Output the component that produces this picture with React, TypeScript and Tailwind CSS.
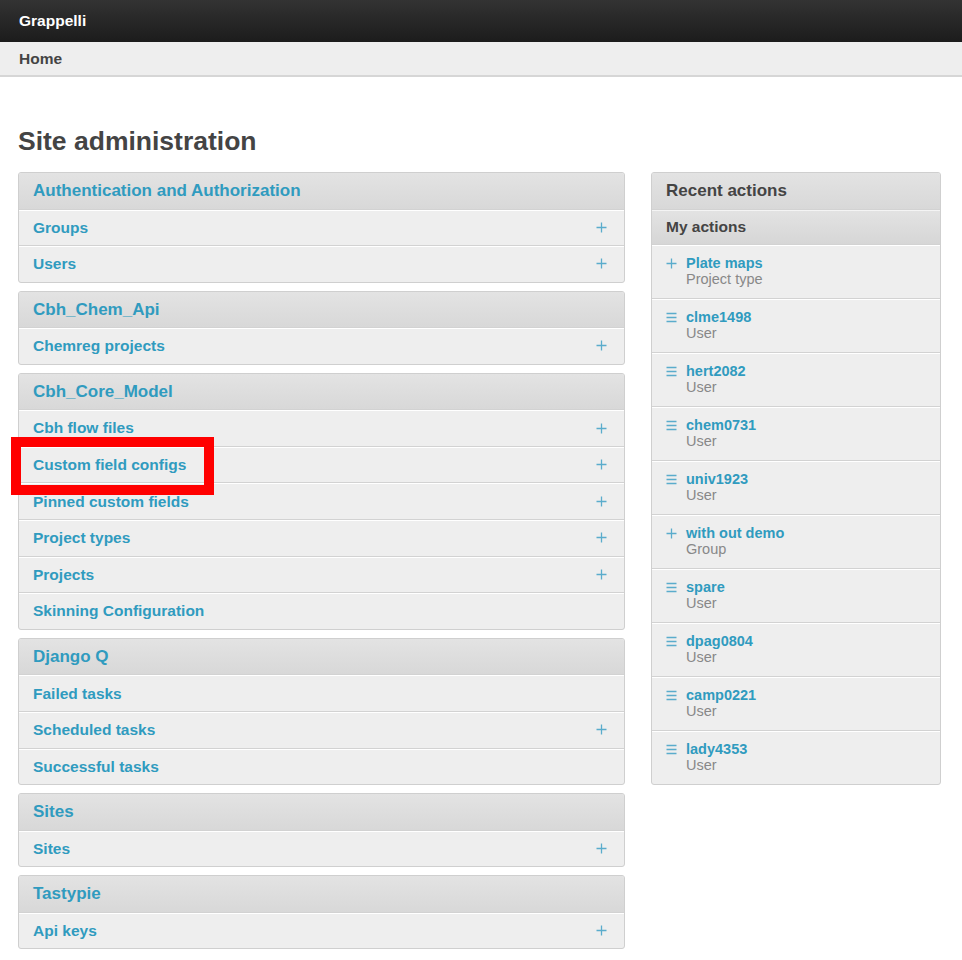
import React from "react";

const modules = [
  {
    title: "Authentication and Authorization",
    rows: [
      { name: "Groups", add: true },
      { name: "Users", add: true },
    ],
  },
  { title: "Cbh_Chem_Api", rows: [{ name: "Chemreg projects", add: true }] },
  {
    title: "Cbh_Core_Model",
    rows: [
      { name: "Cbh flow files", add: true },
      { name: "Custom field configs", add: true },
      { name: "Pinned custom fields", add: true },
      { name: "Project types", add: true },
      { name: "Projects", add: true },
      { name: "Skinning Configuration", add: false },
    ],
  },
  {
    title: "Django Q",
    rows: [
      { name: "Failed tasks", add: false },
      { name: "Scheduled tasks", add: true },
      { name: "Successful tasks", add: false },
    ],
  },
  { title: "Sites", rows: [{ name: "Sites", add: true }] },
  { title: "Tastypie", rows: [{ name: "Api keys", add: true }] },
];

const actions = [
  { name: "Plate maps", type: "Project type", kind: "add" },
  { name: "clme1498", type: "User", kind: "change" },
  { name: "hert2082", type: "User", kind: "change" },
  { name: "chem0731", type: "User", kind: "change" },
  { name: "univ1923", type: "User", kind: "change" },
  { name: "with out demo", type: "Group", kind: "add" },
  { name: "spare", type: "User", kind: "change" },
  { name: "dpag0804", type: "User", kind: "change" },
  { name: "camp0221", type: "User", kind: "change" },
  { name: "lady4353", type: "User", kind: "change" },
];

function PlusIcon() {
  return (
    <svg width="11" height="11" viewBox="0 0 11 11" className="shrink-0">
      <path d="M5.5 0.5v10M0.5 5.5h10" stroke="#5aaccc" strokeWidth="1.3" />
    </svg>
  );
}

function ListIcon() {
  return (
    <svg width="11" height="11" viewBox="0 0 11 11" className="shrink-0">
      <path d="M0.5 1.5h10M0.5 5.5h10M0.5 9.5h10" stroke="#5aaccc" strokeWidth="1.3" />
    </svg>
  );
}

export default function App() {
  return (
    <div
      className="relative min-h-[960px] bg-white"
      style={{ fontFamily: '"Liberation Sans", Arial, sans-serif' }}
    >
      {/* Header */}
      <div className="h-[42px] bg-gradient-to-b from-[#333333] to-[#1c1c1c] flex items-center px-[19px]">
        <span className="text-white font-bold text-[15.5px]">Grappelli</span>
      </div>
      <div className="h-[35px] bg-[#eeeeee] border-b-2 border-[#d6d6d6] flex items-center px-[19px]">
        <span className="text-[#444444] font-bold text-[15.5px]">Home</span>
      </div>

      <div className="px-[18px]">
        <h1 className="mt-[48px] mb-[15px] text-[26.5px] leading-[32px] font-bold text-[#444444]">
          Site administration
        </h1>

        <div className="flex gap-[26px] items-start">
          {/* Modules */}
          <div className="w-[607px] flex flex-col gap-[8px]">
            {modules.map((m) => (
              <div
                key={m.title}
                className="border border-[#cfcfcf] rounded-[3px] overflow-hidden bg-[#eeeeee]"
              >
                <div className="h-[35.5px] bg-gradient-to-b from-[#e3e3e3] to-[#d8d8d8] flex items-center pl-[14px] text-[17px] font-bold text-[#309bbf]">
                  {m.title}
                </div>
                {m.rows.map((r) => (
                  <div
                    key={r.name}
                    className="h-[36.6px] border-t border-[#d2d2d2] shadow-[inset_0_1px_0_#ffffff] flex items-center justify-between pl-[14px] pr-[17px]"
                  >
                    <span className="text-[15.5px] font-bold text-[#309bbf]">{r.name}</span>
                    {r.add && <PlusIcon />}
                  </div>
                ))}
              </div>
            ))}
          </div>

          {/* Recent actions */}
          <div className="w-[290px] border border-[#cfcfcf] rounded-[3px] overflow-hidden bg-[#eeeeee]">
            <div className="h-[36px] bg-gradient-to-b from-[#e3e3e3] to-[#d8d8d8] flex items-center pl-[14px] text-[17px] font-bold text-[#444444]">
              Recent actions
            </div>
            <div className="h-[35px] border-t border-[#d2d2d2] shadow-[inset_0_1px_0_#f4f4f4] bg-gradient-to-b from-[#e3e3e3] to-[#d6d6d6] flex items-center pl-[14px] text-[15.5px] font-bold text-[#444444]">
              My actions
            </div>
            {actions.map((a) => (
              <div
                key={a.name}
                className="h-[54px] border-t border-[#d2d2d2] shadow-[inset_0_1px_0_#ffffff] flex items-start pl-[14px] pt-[10px]"
              >
                <div className="w-[20px] pt-[3px]">
                  {a.kind === "add" ? <PlusIcon /> : <ListIcon />}
                </div>
                <div className="flex flex-col text-[14.5px] leading-[16px]">
                  <span className="font-bold text-[#309bbf]">{a.name}</span>
                  <span className="text-[#888888]">{a.type}</span>
                </div>
              </div>
            ))}
          </div>
        </div>
      </div>

      {/* Highlight box */}
      <div className="absolute left-[11px] top-[437px] w-[203px] h-[58px] border-[10px] border-[#ff0000]" />
    </div>
  );
}
